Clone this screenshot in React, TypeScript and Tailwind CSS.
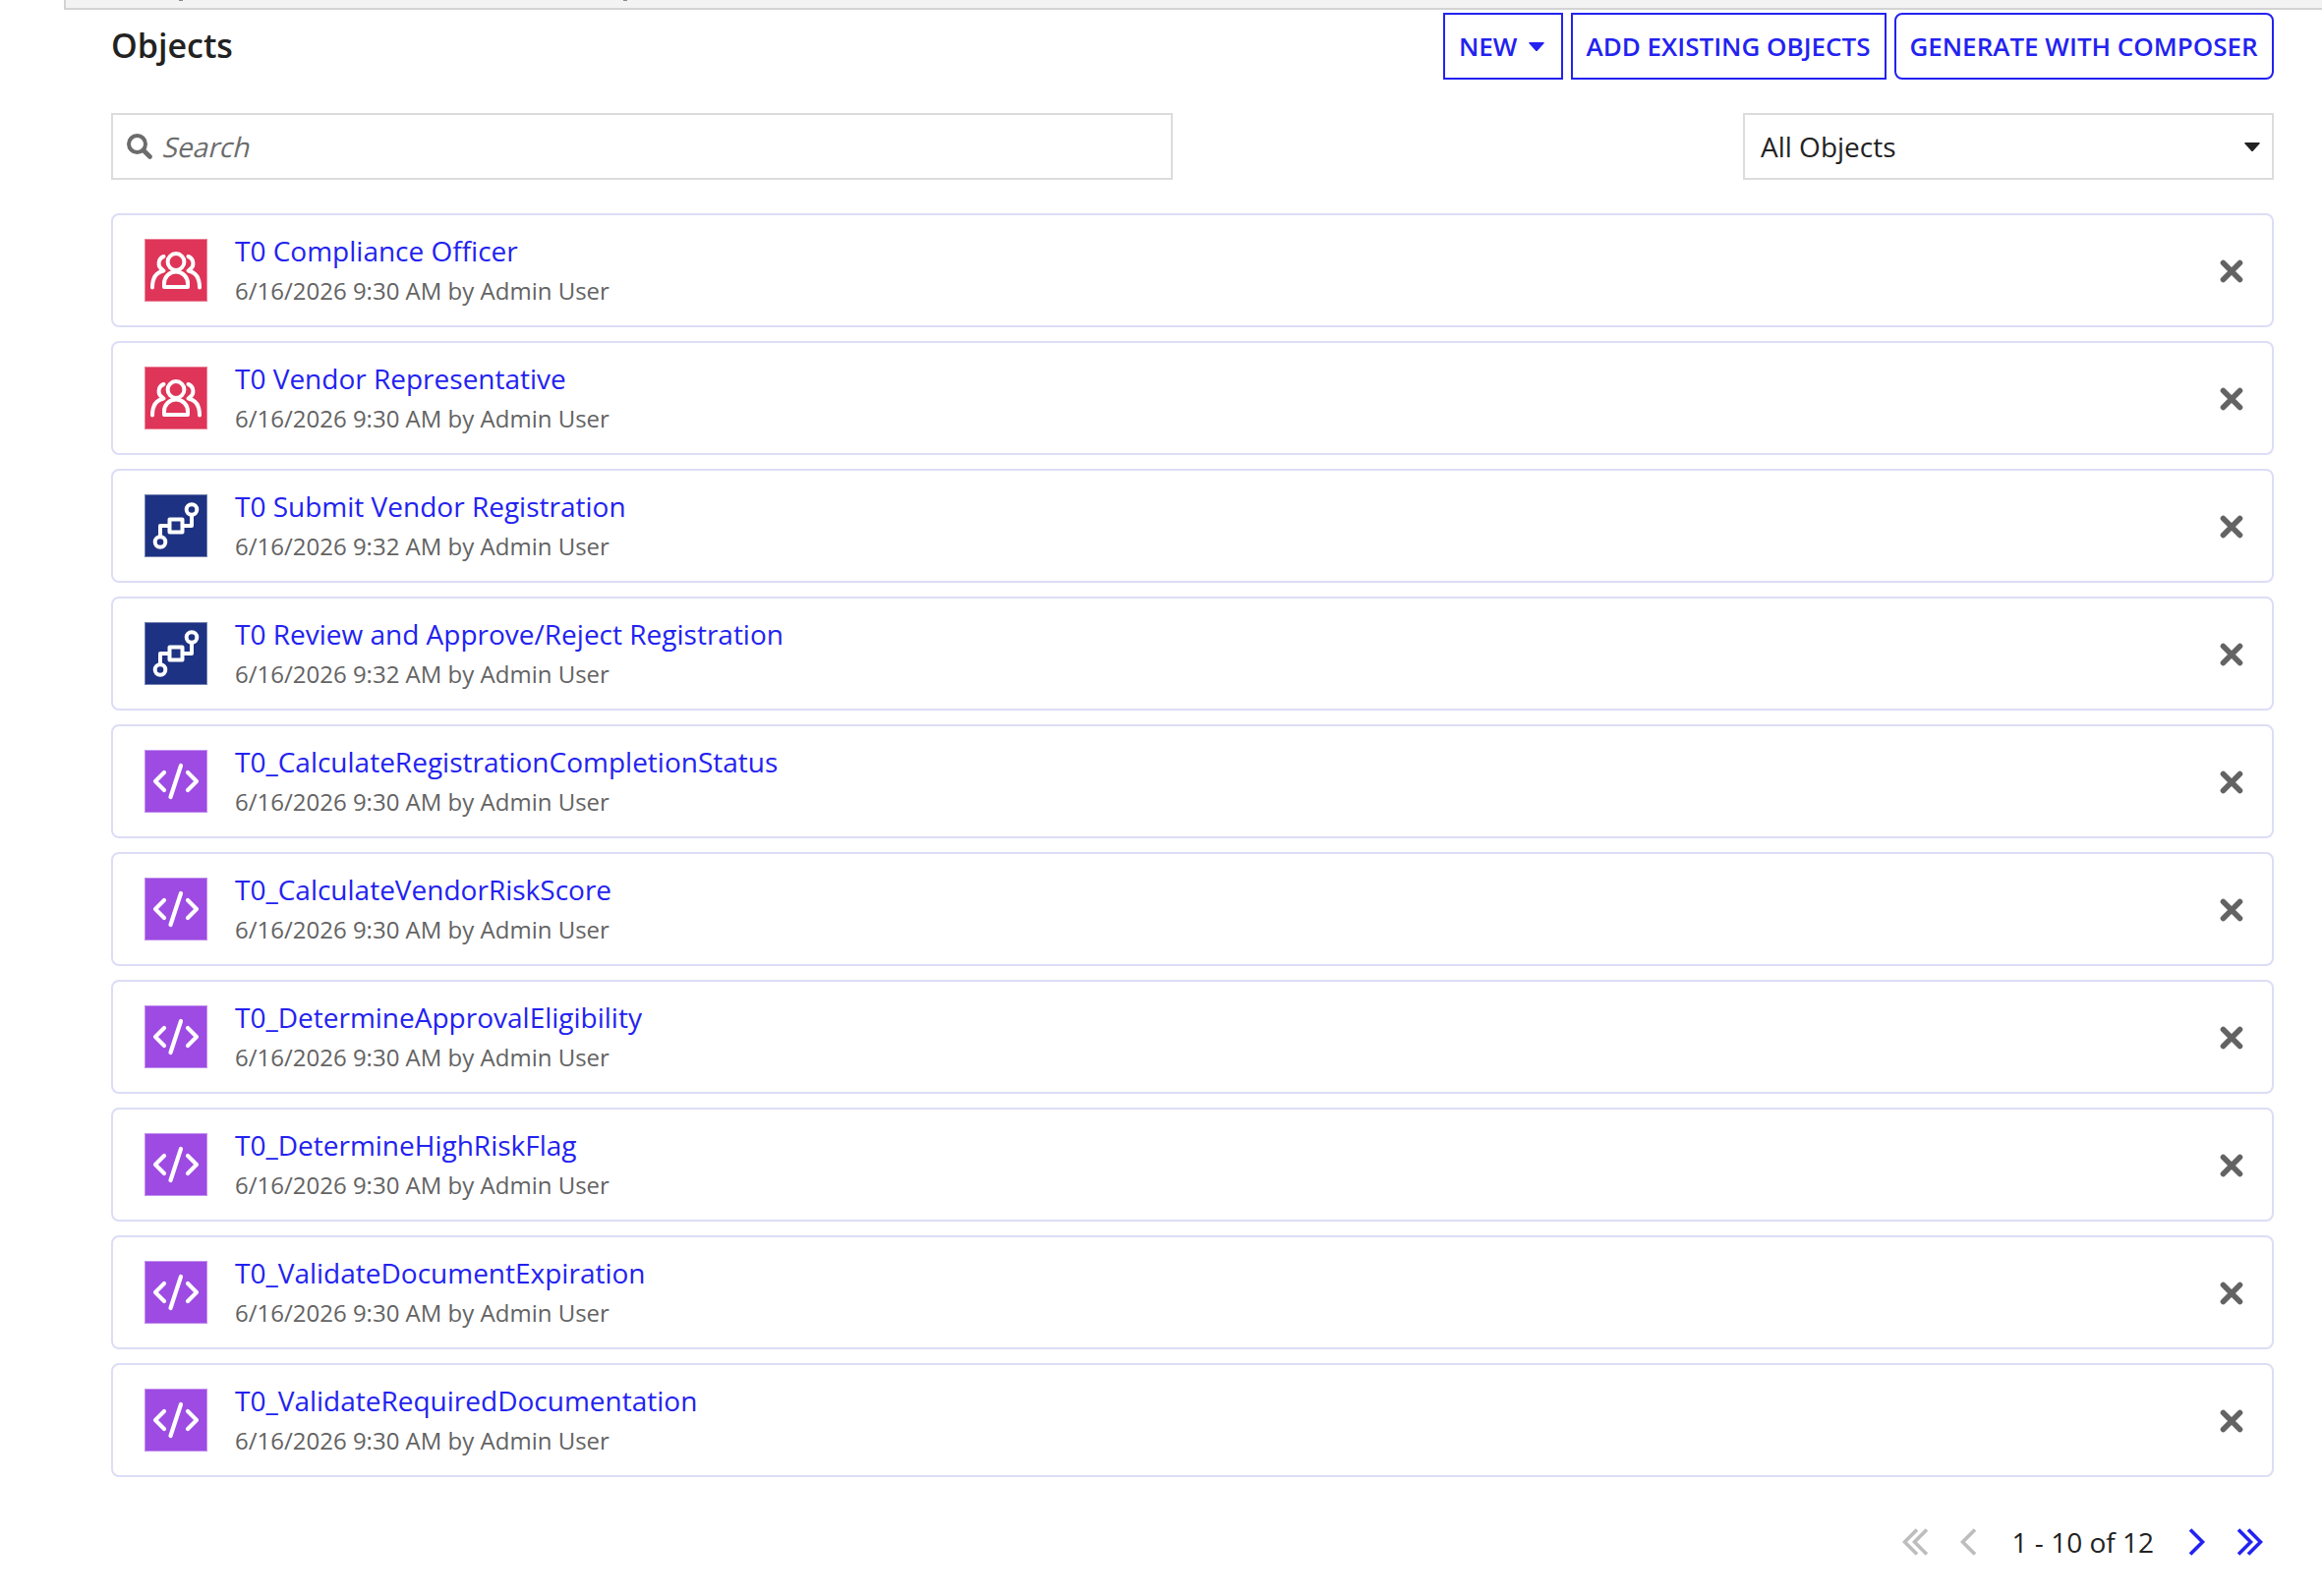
import type { ReactNode } from "react";

type ObjectKind = "group" | "process" | "rule";

type AppObject = { name: string; kind: ObjectKind; modified: string };

const objects: AppObject[] = [
  { name: "T0 Compliance Officer", kind: "group", modified: "6/16/2026 9:30 AM" },
  { name: "T0 Vendor Representative", kind: "group", modified: "6/16/2026 9:30 AM" },
  { name: "T0 Submit Vendor Registration", kind: "process", modified: "6/16/2026 9:32 AM" },
  { name: "T0 Review and Approve/Reject Registration", kind: "process", modified: "6/16/2026 9:32 AM" },
  { name: "T0_CalculateRegistrationCompletionStatus", kind: "rule", modified: "6/16/2026 9:30 AM" },
  { name: "T0_CalculateVendorRiskScore", kind: "rule", modified: "6/16/2026 9:30 AM" },
  { name: "T0_DetermineApprovalEligibility", kind: "rule", modified: "6/16/2026 9:30 AM" },
  { name: "T0_DetermineHighRiskFlag", kind: "rule", modified: "6/16/2026 9:30 AM" },
  { name: "T0_ValidateDocumentExpiration", kind: "rule", modified: "6/16/2026 9:30 AM" },
  { name: "T0_ValidateRequiredDocumentation", kind: "rule", modified: "6/16/2026 9:30 AM" },
];

const tileColors: Record<ObjectKind, string> = {
  group: "bg-[#de3558] border-[#eb8299]",
  process: "bg-[#1d3282] border-[#7480b1]",
  rule: "bg-[#9d4be3] border-[#c28fee]",
};

const glyphs: Record<ObjectKind, ReactNode> = {
  group: (
    <g strokeWidth="4">
      <circle cx="32" cy="23.5" r="8.4" />
      <path d="M20 49v-3.500a12 12 0 0 1 24 0V49z" />
      <path d="M19.500 18a7.400 7.400 0 0 0-1.500 13.200M44.500 18a7.400 7.400 0 0 1 1.500 13.200" />
      <path d="M19.500 32.500C12 34 8 39 8 49.500M44.500 32.500C52 34 56 39 56 49.500" />
    </g>
  ),
  process: (
    <g strokeWidth="4">
      <circle cx="16" cy="48.500" r="5.300" />
      <circle cx="48" cy="15.500" r="5.300" />
      <rect x="25.500" y="25.500" width="13" height="13" />
      <path d="M16 42.500V32h9M39 32h9V21.500" />
    </g>
  ),
  rule: (
    <g strokeWidth="4.200">
      <path d="M20 23L11 32l9 9M44 23l9 9l-9 9M37 16l-10.500 32" />
    </g>
  ),
};

function ObjectTile({ kind }: { kind: ObjectKind }) {
  return (
    <div className={`size-16 shrink-0 border ${tileColors[kind]}`}>
      <svg
        viewBox="1 1 62 62"
        className="block size-full"
        fill="none"
        stroke="white"
        strokeLinecap="round"
        strokeLinejoin="round"
      >
        {glyphs[kind]}
      </svg>
    </div>
  );
}

function Caret() {
  return (
    <svg viewBox="0 0 16 9" className="h-[9px] w-4 shrink-0" fill="currentColor">
      <path d="M1 0h14q1.500 0 .5 1.200L9 8.400q-1 1-2 0L.5 1.200Q-.5 0 1 0z" />
    </svg>
  );
}

function ObjectRow({ object }: { object: AppObject }) {
  return (
    <li className="flex h-[116px] items-center rounded-lg border-2 border-[#dcddf6] pr-[29px] pl-8">
      <ObjectTile kind={object.kind} />
      <div className="ml-7 flex-1 pb-[2px]">
        <a href="#" className="block text-[28px] leading-[42px] text-[#2322f0]">
          {object.name}
        </a>
        <p className="text-[24px] leading-[39px] text-[#636363]">{object.modified} by Admin User</p>
      </div>
      <button aria-label={`Remove ${object.name}`} className="pt-px text-[#636363]">
        <svg viewBox="0 0 24 24" className="size-6" fill="none" stroke="currentColor" strokeWidth="5.600" strokeLinecap="round">
          <path d="M3.500 3.500l17 17M20.500 3.500l-17 17" />
        </svg>
      </button>
    </li>
  );
}

function Chevron({ d, label, className }: { d: string; label: string; className: string }) {
  return (
    <button aria-label={label} className={className}>
      <svg viewBox="0 0 26 28" className="h-7 w-[26px]" fill="none" stroke="currentColor" strokeWidth="3.600">
        <path d={d} />
      </svg>
    </button>
  );
}

export default function App() {
  return (
    <div className="h-[1624px] w-[2362px] overflow-hidden bg-white font-['Open_Sans',sans-serif] text-[#222222]">
      {/* bottom edge of the panel above, with the descenders of its text */}
      <div className="ml-[65px] flex h-[10px] items-start border-b-2 border-l-2 border-[#d3d3d3] bg-[#f3f3f3]">
        <span className="ml-[115px] h-px w-1 bg-[#8a8a8a]" />
        <span className="ml-[448px] h-px w-1 bg-[#8a8a8a]" />
      </div>
      <main className="mr-[49px] ml-[113px]">
        <header className="flex items-start justify-between pt-[3px]">
          <h1 className="pt-2 text-[34px] leading-[50px] font-semibold">Objects</h1>
          <div className="flex gap-2 text-[26px] font-semibold whitespace-nowrap text-[#2322f0]">
            <button className="flex h-[68px] w-[122px] items-center gap-3 border-2 border-[#2322f0] pl-[14px]">
              NEW <Caret />
            </button>
            <button className="h-[68px] w-[321px] border-2 border-[#2322f0] pr-px">ADD EXISTING OBJECTS</button>
            <button className="h-[68px] w-[386px] rounded-lg border-2 border-[#2322f0] pr-px">GENERATE WITH COMPOSER</button>
          </div>
        </header>

        <div className="mt-[34px] flex justify-between text-[28px]">
          <label className="flex h-[68px] w-[1080px] items-center gap-3 border-2 border-[#dcdcdc] pl-[14px]">
            <svg viewBox="0 0 26 26" className="size-[26px] shrink-0" fill="none" stroke="#6c6c6c" strokeLinecap="round">
              <circle cx="10.500" cy="10.500" r="8.500" strokeWidth="4" />
              <path d="M17 17l6.500 6.500" strokeWidth="4.600" />
            </svg>
            <span className="-skew-x-[14deg] text-[#6c6c6c]">Search</span>
          </label>
          <div className="flex h-[68px] w-[540px] items-center justify-between border-2 border-[#dcdcdc] pr-3 pl-4">
            All Objects
            <Caret />
          </div>
        </div>

        <ul className="mt-[34px] flex flex-col gap-[14px]">
          {objects.map((object) => (
            <ObjectRow key={object.name} object={object} />
          ))}
        </ul>

        <nav className="mt-[45px] flex items-center justify-end pr-[11px] text-[28px] leading-[42px] text-[#222222]">
          <Chevron label="First page" className="text-[#bdbdbd]" d="M15 1.500L2.500 14L15 26.500M25 1.500L12.500 14L25 26.500" />
          <Chevron label="Previous page" className="ml-[31px] text-[#bdbdbd]" d="M17 1.500L4.500 14L17 26.500" />
          <span className="mr-7 ml-[29px]">1 - 10 of 12</span>
          <Chevron label="Next page" className="text-[#2322f0]" d="M9 1.500L21.500 14L9 26.500" />
          <Chevron label="Last page" className="ml-[31px] text-[#2322f0]" d="M1 1.500L13.500 14L1 26.500M11 1.500L23.500 14L11 26.500" />
        </nav>
      </main>
    </div>
  );
}
